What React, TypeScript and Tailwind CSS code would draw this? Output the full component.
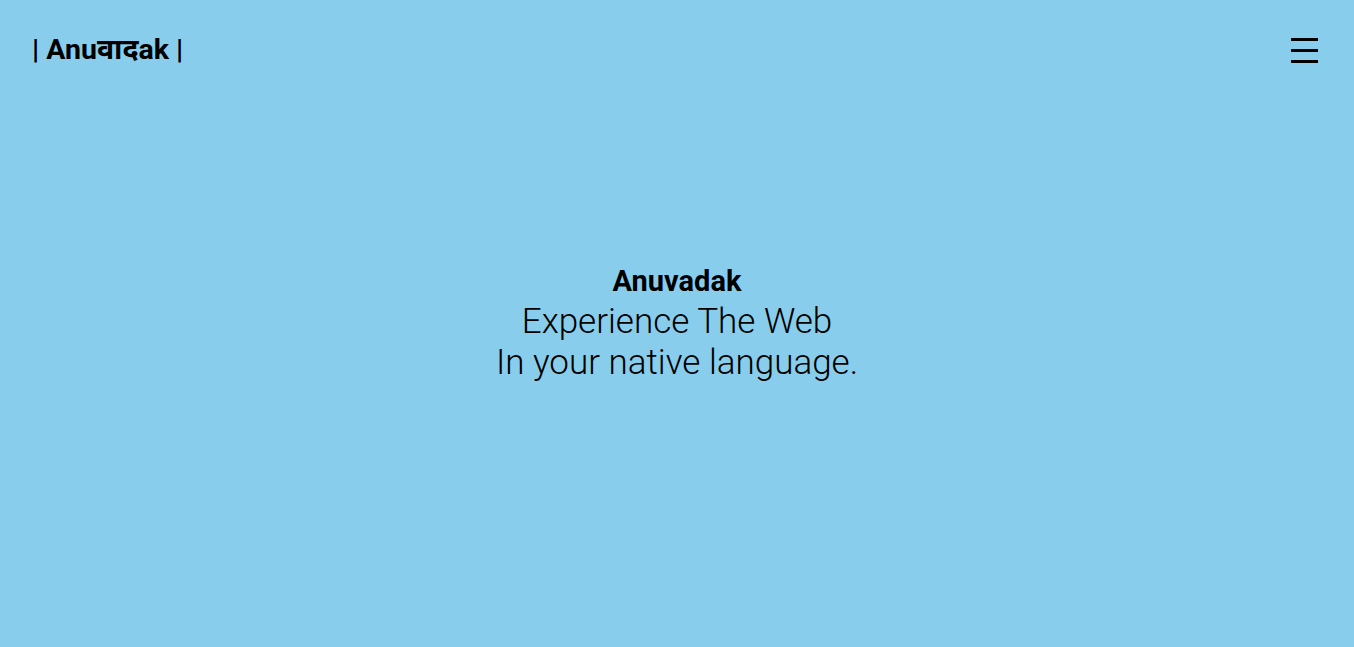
export default function App() {
  return (
    <div
      className="relative flex h-screen w-full flex-col bg-[#88cdeb] text-black"
      style={{ fontFamily: "Roboto, 'Noto Sans', 'DejaVu Sans', sans-serif" }}
    >
      <header className="absolute left-0 right-0 top-0 flex items-center justify-between pl-[32px] pr-[36px] pt-[32px]">
        <div className="text-[28.5px] font-bold leading-[36px]">| Anuवादak |</div>
        <button className="flex h-[36px] w-[27px] flex-col justify-center gap-[8px]" aria-label="menu">
          <span className="block h-[3px] w-[27px] bg-black" />
          <span className="block h-[3px] w-[27px] bg-black" />
          <span className="block h-[3px] w-[27px] bg-black" />
        </button>
      </header>

      <main className="flex flex-1 flex-col items-center justify-center pb-[4px] text-center">
        <h1 className="text-[29px] font-bold leading-[40px]">Anuvadak</h1>
        <p className="text-[35px] font-light leading-[41px]">Experience The Web</p>
        <p className="text-[35px] font-light leading-[41px]">In your native language.</p>
      </main>
    </div>
  );
}
